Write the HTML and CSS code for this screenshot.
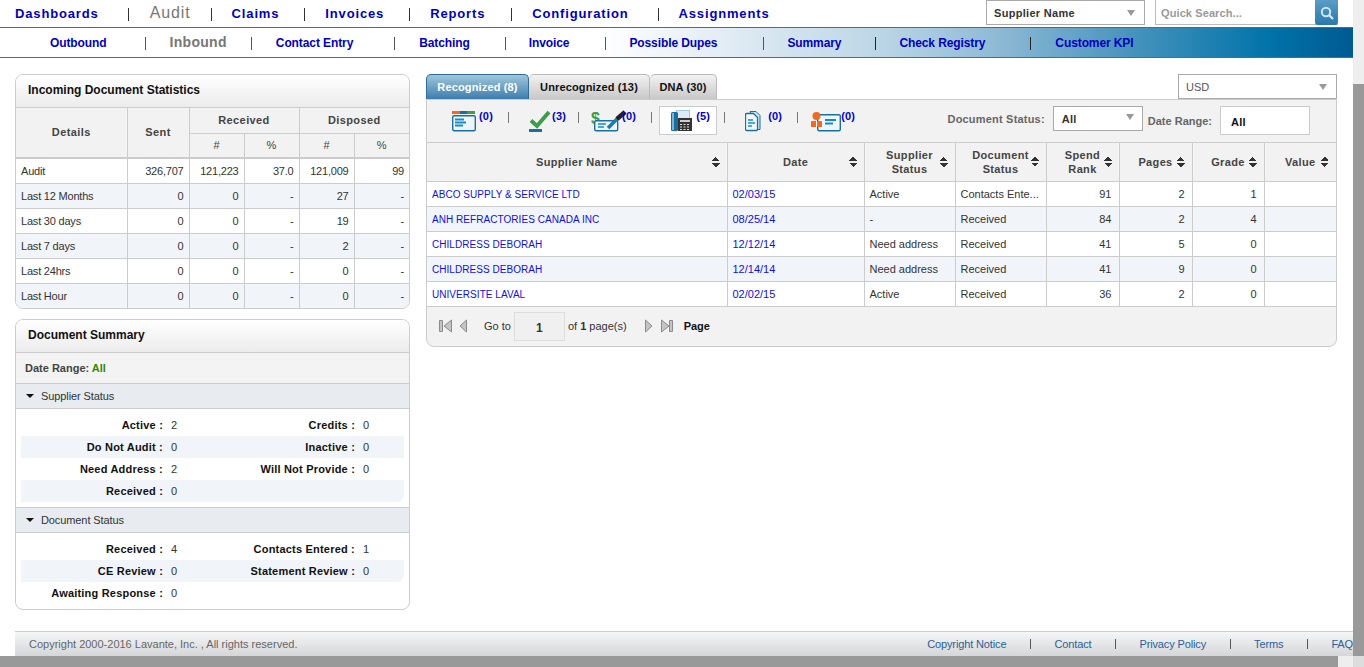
FILE: index.html
```html
<!DOCTYPE html>
<html>
  <head>
    <meta charset="utf-8">
    <title>Inbound</title>
    <link rel="stylesheet" href="styles.css">
  </head>
  <body>
    <div class="page">
      <!-- main nav -->
      <header class="topbar">
        <nav class="mainnav">
          <a class="m1" href="#">Dashboards</a><i></i>
          <a class="m2 on" href="#">Audit</a><i></i>
          <a class="m3" href="#">Claims</a><i></i>
          <a class="m4" href="#">Invoices</a><i></i>
          <a class="m5" href="#">Reports</a><i></i>
          <a class="m6" href="#">Configuration</a><i></i>
          <a class="m7" href="#">Assignments</a>
        </nav>
        <div class="topsearch">
          <div class="dropdown top-drop"><b>Supplier Name</b><span class="arrow"></span></div>
          <div class="quick">
            <span class="quick-text">Quick Search...</span>
            <span class="quick-btn">
              <svg width="16" height="16" viewBox="0 0 16 16"><circle cx="7" cy="7" r="4.2" fill="none" stroke="#cfe6f2" stroke-width="2"/><path d="M10 10l4 4" stroke="#cfe6f2" stroke-width="2.4"/></svg>
            </span>
          </div>
        </div>
      </header>

      <nav class="subnav">
        <a class="s1" href="#">Outbound</a><i></i>
        <a class="s2 on" href="#">Inbound</a><i></i>
        <a class="s3" href="#">Contact Entry</a><i></i>
        <a class="s4" href="#">Batching</a><i></i>
        <a class="s5" href="#">Invoice</a><i></i>
        <a class="s6" href="#">Possible Dupes</a><i></i>
        <a class="s7" href="#">Summary</a><i class="dark"></i>
        <a class="s8" href="#">Check Registry</a><i class="dark"></i>
        <a class="s9" href="#">Customer KPI</a>
      </nav>

      <main class="content">
        <div class="leftcol">
          <section class="panel">
            <h2>Incoming Document Statistics</h2>
            <table class="stats">
              <thead>
                <tr>
                  <th rowspan="2" class="c-details">Details</th>
                  <th rowspan="2" class="c-sent">Sent</th>
                  <th colspan="2">Received</th>
                  <th colspan="2">Disposed</th>
                </tr>
                <tr class="sub">
                  <th class="c-n">#</th><th class="c-n">%</th><th class="c-n">#</th><th>%</th>
                </tr>
              </thead>
              <tbody>
                <tr><td>Audit</td><td>326,707</td><td>121,223</td><td>37.0</td><td>121,009</td><td>99</td></tr>
                <tr><td>Last 12 Months</td><td>0</td><td>0</td><td>-</td><td>27</td><td>-</td></tr>
                <tr><td>Last 30 days</td><td>0</td><td>0</td><td>-</td><td>19</td><td>-</td></tr>
                <tr><td>Last 7 days</td><td>0</td><td>0</td><td>-</td><td>2</td><td>-</td></tr>
                <tr><td>Last 24hrs</td><td>0</td><td>0</td><td>-</td><td>0</td><td>-</td></tr>
                <tr><td>Last Hour</td><td>0</td><td>0</td><td>-</td><td>0</td><td>-</td></tr>
              </tbody>
            </table>
          </section>

          <section class="panel summary">
            <h2>Document Summary</h2>
            <div class="range">Date Range: <span>All</span></div>

            <div class="group"><span class="tri"></span>Supplier Status</div>
            <div class="facts">
              <div class="fact"><b>Active :</b><em>2</em><b>Credits :</b><em>0</em></div>
              <div class="fact"><b>Do Not Audit :</b><em>0</em><b>Inactive :</b><em>0</em></div>
              <div class="fact"><b>Need Address :</b><em>2</em><b>Will Not Provide :</b><em>0</em></div>
              <div class="fact"><b>Received :</b><em>0</em><b></b><em></em></div>
            </div>

            <div class="group"><span class="tri"></span>Document Status</div>
            <div class="facts last">
              <div class="fact"><b>Received :</b><em>4</em><b>Contacts Entered :</b><em>1</em></div>
              <div class="fact round"><b>CE Review :</b><em>0</em><b>Statement Review :</b><em>0</em></div>
              <div class="fact"><b>Awaiting Response :</b><em>0</em><b></b><em></em></div>
            </div>
          </section>
        </div>

        <div class="rightcol">
          <div class="tabrow">
            <a class="tab active" href="#">Recognized (8)</a>
            <a class="tab t2" href="#">Unrecognized (13)</a>
            <a class="tab t3" href="#">DNA (30)</a>
            <div class="dropdown usd"><span>USD</span><span class="arrow"></span></div>
          </div>

          <section class="docs">
            <div class="toolbar">
              <div class="tool w1">
                <svg width="24" height="24" viewBox="0 0 24 24"><rect x="0" y="2" width="8" height="3" fill="#f26a21"/><rect x="8" y="2" width="7" height="3" fill="#136fa6"/><rect x="15" y="2" width="8" height="3" fill="#3f9c4a"/><rect x="0.700" y="6.700" width="22.600" height="15" rx="1.500" fill="#eef6fb" stroke="#1a6ea0" stroke-width="1.400"/><path d="M3 10.500h9M3 13.500h11M3 16.500h8" stroke="#1a8ac4" stroke-width="1.800"/></svg>
                <a href="#">(0)</a>
              </div>
              <i></i>
              <div class="tool w2">
                <svg width="22" height="24" viewBox="0 0 22 24"><path d="M2 11.500l6 5.500L20 3" fill="none" stroke="#3f9c4a" stroke-width="4"/><rect x="0" y="20" width="13" height="3" fill="#1a6ea0"/></svg>
                <a href="#">(3)</a>
              </div>
              <i></i>
              <div class="tool w3">
                <svg width="38" height="24" viewBox="0 0 38 24"><text x="0" y="15" class="dollar">$</text><rect x="3.700" y="11.700" width="23" height="10" rx="1.500" fill="#eef6fb" stroke="#1a6ea0" stroke-width="1.400"/><path d="M7 15h8M7 18h6" stroke="#1a8ac4" stroke-width="1.600"/><path d="M17 19l10-10" stroke="#1a7ab4" stroke-width="3.500"/><path d="M26 10l8-7" stroke="#222" stroke-width="4.500"/></svg>
                <a href="#">(0)</a>
              </div>
              <i></i>
              <div class="tool w4">
                <svg width="21" height="24" viewBox="0 0 21 24"><rect x="5.500" y="1.500" width="13" height="9" fill="#dcebf5" stroke="#a6c8de"/><rect x="0" y="3" width="7" height="19" rx="1.500" fill="#1a6ea0"/><rect x="1" y="4" width="2" height="17" fill="#7fb3d2"/><rect x="7" y="9" width="14" height="13" fill="#333"/><path d="M9 12h10" stroke="#ccc" stroke-width="2"/><path d="M9 15.500h2m1.500 0h2m1.500 0h2M9 18h2m1.500 0h2m1.500 0h2M9 20.500h2m1.500 0h2m1.500 0h2" stroke="#ddd"/></svg>
                <a href="#">(5)</a>
              </div>
              <i></i>
              <div class="tool w5">
                <svg width="16" height="24" viewBox="0 0 16 24"><path d="M5 2.500h6l4 4v14h-3z" fill="#cfe3f0" stroke="#1a6ea0"/><path d="M1.500 4.500h7l4 4v12a1 1 0 0 1-1 1h-10a1 1 0 0 1-1-1v-15a1 1 0 0 1 1-1z" fill="#f4f9fc" stroke="#1a6ea0" stroke-width="1.300"/><path d="M3 11h5M3 14h7M3 17h4" stroke="#1a8ac4" stroke-width="1.500"/></svg>
                <a href="#">(0)</a>
              </div>
              <i></i>
              <div class="tool w6">
                <svg width="30" height="24" viewBox="0 0 30 24"><rect x="6.700" y="5.700" width="22.600" height="16" rx="1.500" fill="#eef6fb" stroke="#1a6ea0" stroke-width="1.400"/><path d="M14 11h11M14 14.500h8" stroke="#1a8ac4" stroke-width="1.800"/><circle cx="5.500" cy="7" r="4" fill="#f26a21"/><path d="M1 12h9a1 1 0 0 1 1 1v5H0v-5a1 1 0 0 1 1-1z" fill="#f26a21"/><path d="M5.500 12v6" stroke="#fff"/></svg>
                <a href="#">(0)</a>
              </div>
              <div class="filters">
                <label>Document Status:</label>
                <div class="dropdown status"><b>All</b><span class="arrow"></span></div>
                <label class="lower">Date Range:</label>
                <div class="rangebox">All</div>
              </div>
            </div>

            <table class="grid">
              <thead>
                <tr>
                  <th class="g1"><span class="sort">Supplier Name</span></th>
                  <th class="g2"><span class="sort">Date</span></th>
                  <th class="g3"><span class="sort">Supplier<br>Status</span></th>
                  <th class="g4"><span class="sort">Document<br>Status</span></th>
                  <th class="g5"><span class="sort">Spend<br>Rank</span></th>
                  <th class="g6"><span class="sort">Pages</span></th>
                  <th class="g7"><span class="sort">Grade</span></th>
                  <th><span class="sort">Value</span></th>
                </tr>
              </thead>
              <tbody>
                <tr><td><a href="#">ABCO SUPPLY &amp; SERVICE LTD</a></td><td><a href="#">02/03/15</a></td><td>Active</td><td>Contacts Ente...</td><td class="n">91</td><td class="n">2</td><td class="n">1</td><td></td></tr>
                <tr><td><a href="#">ANH REFRACTORIES CANADA INC</a></td><td><a href="#">08/25/14</a></td><td>-</td><td>Received</td><td class="n">84</td><td class="n">2</td><td class="n">4</td><td></td></tr>
                <tr><td><a href="#">CHILDRESS DEBORAH</a></td><td><a href="#">12/12/14</a></td><td>Need address</td><td>Received</td><td class="n">41</td><td class="n">5</td><td class="n">0</td><td></td></tr>
                <tr><td><a href="#">CHILDRESS DEBORAH</a></td><td><a href="#">12/14/14</a></td><td>Need address</td><td>Received</td><td class="n">41</td><td class="n">9</td><td class="n">0</td><td></td></tr>
                <tr><td><a href="#">UNIVERSITE LAVAL</a></td><td><a href="#">02/02/15</a></td><td>Active</td><td>Received</td><td class="n">36</td><td class="n">2</td><td class="n">0</td><td></td></tr>
              </tbody>
            </table>

            <div class="pager">
              <svg width="29" height="14" viewBox="0 0 29 14"><path d="M0.500 1.500h3v11h-3zM12.500 1v12L5 7z" fill="#c4c4c4" stroke="#8c8c8c"/><path d="M27.500 1v12L21 7z" fill="#c4c4c4" stroke="#8c8c8c"/></svg>
              <span class="goto">Go to</span>
              <span class="pagebox">1</span>
              <span class="of">of <b>1</b> page(s)</span>
              <svg class="pg-last" width="28" height="14" viewBox="0 0 28 14"><path d="M0.500 1v12L7 7z" fill="#c4c4c4" stroke="#8c8c8c"/><path d="M16.500 1v12L24 7zM24.500 1.500h3v11h-3z" fill="#c4c4c4" stroke="#8c8c8c"/></svg>
              <b class="pagelabel">Page</b>
            </div>
          </section>
        </div>
      </main>

      <footer class="foot">
        <span class="copy">Copyright 2000-2016 Lavante, Inc. , All rights reserved.</span>
        <div class="footlinks">
          <a href="#">Copyright Notice</a><i></i>
          <a href="#">Contact</a><i></i>
          <a href="#">Privacy Policy</a><i></i>
          <a href="#">Terms</a><i></i>
          <a href="#">FAQ</a>
        </div>
      </footer>

      <!-- fake scrollbars -->
      <div class="vbar"><div class="vthumb"></div></div>
      <div class="hbar"><div class="hthumb"></div><div class="corner"></div></div>
    </div>
  </body>
</html>
```

FILE: styles.css
```css
* {
  box-sizing: border-box;
}
html, body {
  margin: 0;
  height: 100%;
  overflow: hidden;
  background: #fff;
}
body {
  font-family: "Liberation Sans", Arial, sans-serif;
  font-size: 11px;
  color: #222;
}
a {
  text-decoration: none;
}
.page {
  position: relative;
  width: 1364px;
  height: 667px;
  overflow: hidden;
}

/* top nav */
.topbar {
  display: flex;
  justify-content: space-between;
  width: 1353px;
  height: 28px;
  border-bottom: 1px solid #666;
}
.mainnav {
  display: flex;
  align-items: center;
  height: 27px;
  padding-left: 15px;
  font-size: 13px;
  font-weight: bold;
  letter-spacing: 0.85px;
}
.mainnav a, .subnav a {
  color: #0000bb;
}
.mainnav i, .subnav i, .footlinks i {
  display: block;
  width: 1px;
  background: #333;
}
.mainnav i {
  height: 13px;
  margin-top: 2px;
}
.mainnav .on {
  color: #777;
  font-size: 16px;
  font-weight: normal;
  letter-spacing: 0.9px;
  margin-top: -2px;
}
.m1 { margin-right: 29px; }
.m2 { margin: 0 20px 0 21px; }
.m3 { margin: 0 25px 0 20px; }
.m4 { margin: 0 25px 0 20px; }
.m5 { margin: 0 26px 0 20px; }
.m6 { margin: 0 29px 0 20px; }
.m7 { margin-left: 20px; }

.topsearch {
  display: flex;
  margin-right: 15px;
}
.dropdown {
  position: relative;
  display: flex;
  align-items: center;
  background: #fff;
  border: 1px solid #aaa;
  padding-left: 7px;
}
.arrow {
  position: absolute;
  right: 9px;
  top: 50%;
  margin-top: -3px;
  border-left: 4px solid transparent;
  border-right: 4px solid transparent;
  border-top: 6px solid #999;
}
.top-drop {
  width: 159px;
  height: 25px;
  color: #333;
  letter-spacing: 0.3px;
}
.quick {
  display: flex;
  width: 183px;
  height: 25px;
  margin-left: 10px;
  border: 1px solid #bbb;
  border-right: 0;
  border-top: 0;
}
.quick-text {
  flex: 1;
  padding: 7px 0 0 5px;
  color: #999;
  font-weight: bold;
  letter-spacing: 0.1px;
}
.quick-btn {
  display: flex;
  align-items: center;
  justify-content: center;
  width: 23px;
  height: 25px;
  border-radius: 0 0 3px 3px;
  background: linear-gradient(#5a9cc6, #2a79ab);
}

/* sub nav */
.subnav {
  display: flex;
  align-items: center;
  width: 1353px;
  height: 30px;
  padding-top: 1px;
  border-bottom: 1px solid #666;
  font-size: 12px;
  font-weight: bold;
  letter-spacing: -0.1px;
  background: linear-gradient(90deg, #fff 0, #fff 600px, #e8f0f7 700px, #bcd6e6 880px, #8db9d5 1000px, #4d96bf 1120px, #0073a8 1270px, #005a92 1353px);
}
.subnav i {
  height: 13px;
  background: #555;
}
.subnav i.dark {
  background: #222;
}
.subnav .on {
  color: #777;
  font-size: 14px;
  letter-spacing: 0.3px;
  margin-top: -2px;
}
.s1 { margin: 0 38px 0 50px; }
.s2 { margin: 0 24px; }
.s3 { margin: 0 41px 0 24px; }
.s4 { margin: 0 35px 0 24px; }
.s5 { margin: 0 36px 0 23px; }
.s6 { margin: 0 46px 0 23px; }
.s7 { margin: 0 34px 0 23px; }
.s8 { margin: 0 45px 0 23px; }
.s9 { margin-left: 24px; }

/* body columns */
.content {
  display: flex;
  gap: 16px;
  padding: 16px 0 0 15px;
  height: 573px;
}
.leftcol {
  display: flex;
  flex-direction: column;
  gap: 10px;
  width: 395px;
}
.rightcol {
  width: 911px;
}

/* left panels */
.panel {
  border: 1px solid #ccc;
  border-radius: 8px;
  overflow: hidden;
  background: #fff;
}
.panel h2 {
  height: 33px;
  margin: 0;
  padding: 8px 12px 0;
  border-bottom: 1px solid #ccc;
  background: linear-gradient(#fff, #ececec);
  font-size: 12px;
  color: #111;
  font-weight: bold;
}
.stats {
  width: 100%;
  border-collapse: collapse;
  table-layout: fixed;
}
.stats th {
  height: 25px;
  padding: 0;
  background: #f2f2f2;
  border: 1px solid #ccc;
  border-top: 0;
  color: #444;
  font-size: 11px;
  letter-spacing: 0.4px;
}
.stats th:last-child, .stats td:last-child {
  border-right: 0;
}
.stats th:first-child, .stats td:first-child {
  border-left: 0;
}
.stats .sub th {
  border-bottom: 2px solid #ccc;
  font-weight: normal;
  letter-spacing: 0;
}
.stats .sub th:first-child {
  border-left: 1px solid #ccc;
}
.stats .c-details, .stats .c-sent {
  border-bottom: 2px solid #ccc;
  padding-bottom: 2px;
}
.c-details { width: 111px; }
.c-sent { width: 62px; }
.c-n { width: 55px; }
.stats td {
  height: 25px;
  padding: 0 5px;
  border: 1px solid #ccc;
  text-align: right;
  color: #333;
  letter-spacing: -0.2px;
}
.stats td:first-child {
  text-align: left;
}
.stats tbody tr:nth-child(even) td {
  background: #f1f4f9;
}
.stats tbody tr:last-child td {
  border-bottom: 0;
}

/* summary */
.range {
  height: 31px;
  padding: 9px 9px 0;
  background: #f3f3f3;
  border-bottom: 1px solid #ccc;
  font-weight: bold;
  color: #444;
}
.range span {
  color: #338800;
}
.group {
  display: flex;
  align-items: center;
  height: 25px;
  padding-left: 10px;
  background: #e8ebf0;
  border-bottom: 1px solid #ccc;
  color: #333;
  letter-spacing: -0.1px;
}
.tri {
  margin-right: 7px;
  border-left: 4px solid transparent;
  border-right: 4px solid transparent;
  border-top: 4px solid #111;
}
.facts {
  padding: 5px;
  border-bottom: 1px solid #ccc;
}
.facts.last {
  border-bottom: 0;
}
.fact {
  display: grid;
  grid-template-columns: 142px 50px 142px 50px;
  align-items: center;
  height: 22px;
  color: #333;
}
.fact:nth-child(even) {
  background: #f1f4f9;
}
.fact:last-child:nth-child(even), .fact.round {
  border-radius: 0 0 8px 0;
}
.fact b {
  text-align: right;
  color: #111;
  letter-spacing: 0.2px;
}
.fact em {
  padding-left: 8px;
  font-style: normal;
}

/* tabs */
.tabrow {
  display: flex;
  height: 25px;
}
.tab {
  display: block;
  height: 25px;
  padding-top: 6px;
  text-align: center;
  border: 1px solid #bbb;
  border-bottom: 0;
  border-left: 0;
  border-radius: 5px 5px 0 0;
  background: linear-gradient(#f2f2f2, #c8c8c8);
  color: #111;
  font-weight: bold;
  letter-spacing: 0.15px;
}
.tab.active {
  width: 103px;
  border: 1px solid #2f6c9b;
  border-bottom: 0;
  background: linear-gradient(#9fc6da, #3d7eae);
  color: #fff;
}
.tab.t2 { width: 121px; }
.tab.t3 { width: 67px; }
.usd {
  width: 159px;
  height: 25px;
  margin-left: auto;
  color: #555;
}

/* documents panel */
.docs {
  height: 248px;
  border: 1px solid #ccc;
  border-radius: 0 0 8px 8px;
  background: #f2f2f2;
  overflow: hidden;
}
.toolbar {
  position: relative;
  display: flex;
  align-items: flex-start;
  height: 43px;
  padding-left: 25px;
  border-bottom: 1px solid #ccc;
}
.toolbar i {
  display: block;
  width: 1px;
  height: 11px;
  margin-top: 12px;
  background: #777;
}
.tool {
  display: flex;
  align-items: flex-start;
  height: 29px;
  margin-top: 6px;
  padding-top: 2px;
  border: 1px solid transparent;
  border-left: 0;
  border-right: 0;
}
.tool a {
  position: relative;
  color: #0000cc;
  font-weight: bold;
  letter-spacing: 0.2px;
  margin-top: 1px;
}
.tool svg {
  display: block;
}
.dollar {
  font-size: 16px;
  font-weight: bold;
  fill: #3f9c4a;
}
.w1 { margin-right: 15px; }
.w1 a { margin-left: 3px; }
.w2 { margin-left: 20px; margin-right: 12px; }
.w2 a { margin-left: 1px; }
.w3 { margin-left: 12px; margin-right: 15px; }
.w3 a { margin-left: -7px; }
.w4 {
  width: 58px;
  margin-left: 7px;
  margin-right: 7px;
  padding-left: 11px;
  background: #fff;
  border: 1px solid #ccc;
}
.w4 a { margin-left: 4px; }
.w5 { margin-left: 20px; margin-right: 15px; }
.w5 a { margin-left: 7px; }
.w6 { margin-left: 13px; }
.filters {
  position: absolute;
  right: 26px;
  top: 6px;
  display: flex;
  align-items: flex-start;
  color: #666;
  font-weight: bold;
  letter-spacing: 0.2px;
}
.filters label {
  padding-top: 7px;
}
.filters .lower {
  padding-top: 9px;
  margin-left: 5px;
  letter-spacing: 0;
}
.status {
  width: 90px;
  height: 25px;
  margin-left: 8px;
  padding-left: 8px;
  color: #333;
}
.status .arrow {
  right: 8px;
  margin-top: -5px;
}
.rangebox {
  width: 90px;
  height: 29px;
  margin-left: 8px;
  padding: 9px 0 0 10px;
  background: #fff;
  border: 1px solid #ccc;
  color: #111;
}

/* data grid */
.grid {
  width: 100%;
  border-collapse: collapse;
  table-layout: fixed;
  background: #fff;
}
.grid th {
  position: relative;
  height: 38px;
  padding: 0;
  background: #f2f2f2;
  border-right: 1px solid #ccc;
  border-bottom: 1px solid #ccc;
  color: #444;
  font-size: 11px;
  line-height: 14px;
  letter-spacing: 0.35px;
}
.grid th:last-child, .grid td:last-child {
  border-right: 0;
}
.grid td {
  height: 25px;
  padding: 0 5px;
  border-right: 1px solid #ccc;
  border-bottom: 1px solid #ccc;
  color: #333;
  white-space: nowrap;
  overflow: hidden;
}
.grid td.n {
  padding-right: 7px;
  text-align: right;
}
.grid td a {
  color: #1010e0;
}
.grid td:first-child a {
  font-size: 10px;
  letter-spacing: 0.05px;
}
.grid tbody tr:nth-child(even) td {
  background: #f1f4f9;
}
.g1 { width: 300px; }
.g2 { width: 137px; }
.g3, .g4 { width: 91px; }
.g5, .g6 { width: 73px; }
.g7 { width: 72px; }
.sort {
  display: inline-block;
}
.grid th::after {
  content: "";
  position: absolute;
  right: 7px;
  top: 50%;
  margin-top: -5px;
  width: 8px;
  height: 10px;
  background: linear-gradient(135deg, transparent 50%, #333 50%) 0 0 / 4px 4px no-repeat,
    linear-gradient(225deg, transparent 50%, #333 50%) 4px 0 / 4px 4px no-repeat,
    linear-gradient(45deg, transparent 50%, #333 50%) 0 6px / 4px 4px no-repeat,
    linear-gradient(315deg, transparent 50%, #333 50%) 4px 6px / 4px 4px no-repeat;
}

/* pager */
.pager {
  display: flex;
  align-items: center;
  height: 39px;
  padding-left: 12px;
  color: #333;
}
.goto {
  margin-left: 16px;
}
.pagebox {
  width: 51px;
  height: 29px;
  margin-left: 3px;
  padding-top: 8px;
  text-align: center;
  background: #f0f0f0;
  border: 1px solid #ddd;
  font-weight: bold;
  font-size: 12px;
}
.of {
  margin-left: 3px;
}
.pg-last {
  margin-left: 18px;
}
.pagelabel {
  margin-left: 11px;
  color: #111;
}

/* footer */
.foot {
  display: flex;
  justify-content: space-between;
  align-items: center;
  width: 1338px;
  height: 25px;
  margin-left: 15px;
  padding-left: 14px;
  border-top: 1px solid #ccc;
  background: linear-gradient(#f6f6f6, #d4d6d9);
  color: #666;
}
.footlinks {
  display: flex;
  align-items: center;
  letter-spacing: -0.13px;
}
.footlinks a {
  color: #2a6099;
}
.footlinks i {
  height: 10px;
  margin: 0 23px 0 24px;
  background: #555;
}

/* scrollbars */
.vbar {
  position: absolute;
  top: 0;
  right: 0;
  width: 11px;
  height: 667px;
  background: #eee;
}
.vthumb {
  height: 583px;
  margin-top: 84px;
  background: #999;
}
.hbar {
  position: absolute;
  left: 0;
  bottom: 0;
  display: flex;
  width: 1364px;
  height: 11px;
  background: #eee;
}
.hthumb {
  width: 1338px;
  background: #999;
}
.corner {
  position: absolute;
  right: 0;
  top: 0;
  width: 11px;
  height: 11px;
  background: #ddd;
}
```
